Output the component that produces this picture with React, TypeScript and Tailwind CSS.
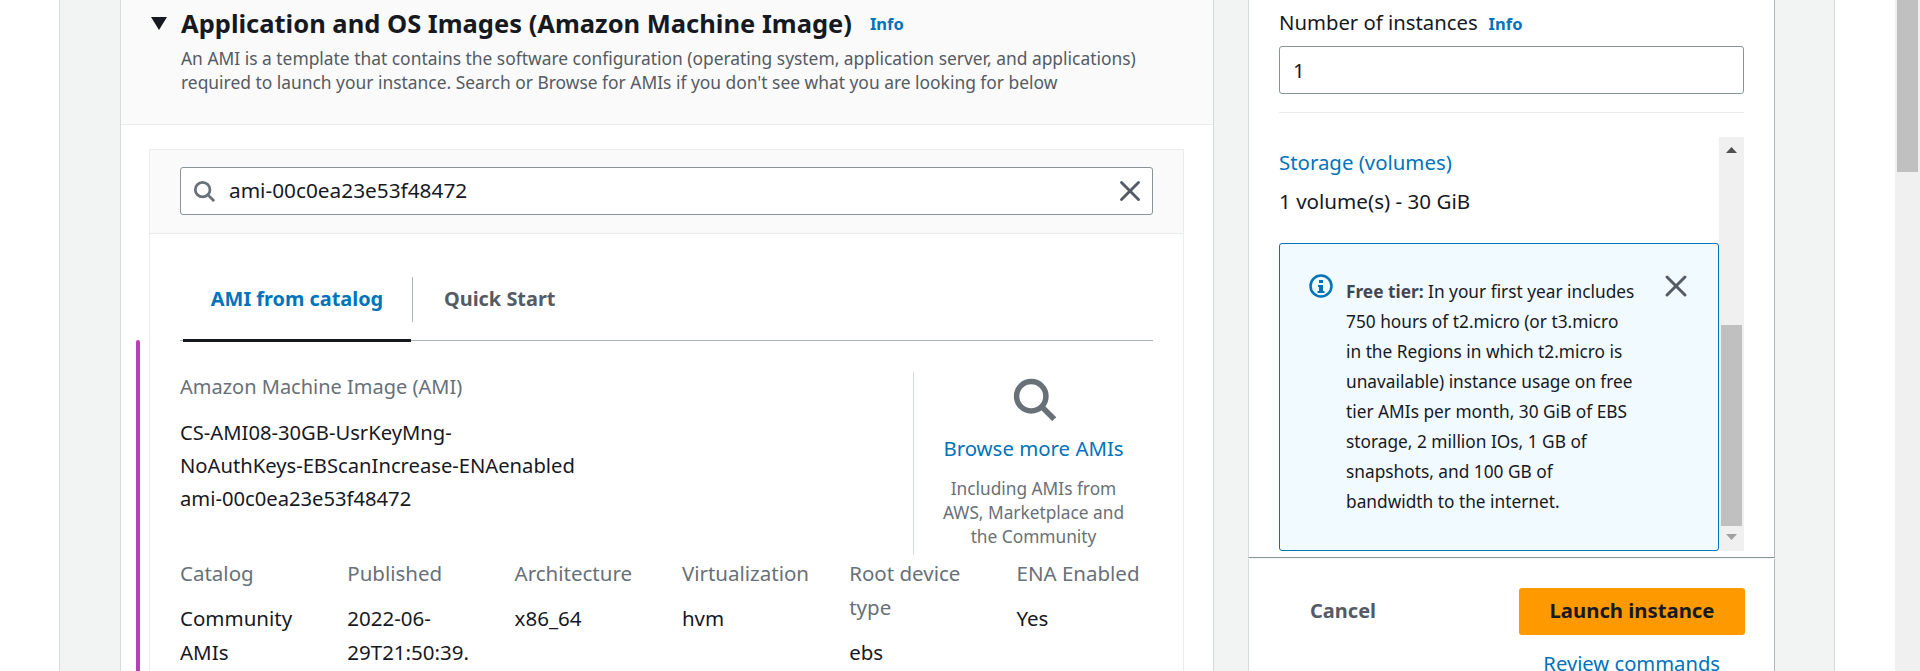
import { X } from "lucide-react";

const columns = [
  { label: "Catalog", value: ["Community", "AMIs"] },
  { label: "Published", value: ["2022-06-", "29T21:50:39."] },
  { label: "Architecture", value: ["x86_64"] },
  { label: "Virtualization", value: ["hvm"] },
  { label: "Root device type", value: ["ebs"] },
  { label: "ENA Enabled", value: ["Yes"] },
];

function SearchIcon({ className }: { className: string }) {
  return (
    <svg className={className} viewBox="0 0 24 24" fill="none" stroke="currentColor" strokeWidth="3">
      <circle cx="10.5" cy="10.5" r="8" />
      <path d="M16.5 16.5L23 23" />
    </svg>
  );
}

function InfoLink() {
  return <span className="text-[16.5px] font-bold text-[#0073bb]">Info</span>;
}

function AmiPanel() {
  return (
    <section className="relative w-[1094px] shrink-0 border-x border-[#d5dbdb] bg-white">
      {/* purple marker drawn over the screenshot */}
      <div className="absolute left-[15px] top-[340px] h-[400px] w-[4px] rounded-t-[2px] bg-[#bb3fbb]" />

      {/* header */}
      <div className="h-[125px] border-b border-[#eaeded] bg-[#fafafa] pl-[30px] pt-[7px]">
        <div className="flex items-center">
          <svg className="h-[13px] w-[16px]" viewBox="0 0 16 13">
            <path d="M0 0h16L8 13z" fill="#16191f" />
          </svg>
          <h2 className="ml-[14px] whitespace-nowrap text-[25.5px] leading-[32px] font-bold text-[#16191f]">
            Application and OS Images (Amazon Machine Image)
          </h2>
          <span className="ml-[18px] mt-[2px]">
            <InfoLink />
          </span>
        </div>
        <p className="ml-[30px] mt-[7px] whitespace-nowrap text-[17.4px] leading-[24px] text-[#545b64]">
          An AMI is a template that contains the software configuration (operating system, application server, and
          applications)
          <br />
          required to launch your instance. Search or Browse for AMIs if you don't see what you are looking for below
        </p>
      </div>

      {/* card */}
      <div className="ml-[28px] mr-[29px] mt-[24px] border border-b-0 border-[#eaeded] h-[600px]">
        <div className="h-[84px] border-b border-[#eaeded] bg-[#fafafa] px-[30px] pt-[17px]">
          <div className="flex h-[48px] items-center rounded-[3px] border border-[#879596] bg-white pl-[12px] pr-[5px]">
            <SearchIcon className="h-[22px] w-[22px] text-[#687078]" />
            <span className="ml-[14px] flex-1 text-[20.8px] text-[#16191f]">ami-00c0ea23e53f48472</span>
            <X className="h-[34px] w-[34px] text-[#545b64]" strokeWidth={2} />
          </div>
        </div>

        <div className="px-[30px] pt-[43px]">
          <div className="flex h-[64px] items-start border-b border-[#aab7b8]">
            <div className="relative z-10 ml-[3px] flex h-[65px] w-[228px] justify-center border-b-[3px] border-[#16191f]">
              <span className="flex h-[43px] items-center text-[19.9px] font-bold text-[#0073bb]">AMI from catalog</span>
            </div>
            <div className="ml-[1px] h-[45px] w-px bg-[#aab7b8]" />
            <span className="ml-[31px] flex h-[43px] items-center text-[19.9px] font-bold text-[#545b64]">Quick Start</span>
          </div>

          <div className="mt-[31px] flex h-[183px]">
            <div className="flex-1 pt-[3px]">
              <div className="text-[20px] leading-[24px] text-[#687078]">Amazon Machine Image (AMI)</div>
              <div className="mt-[17px] text-[20.2px] leading-[33px] text-[#16191f]">
                CS-AMI08-30GB-UsrKeyMng-
                <br />
                NoAuthKeys-EBScanIncrease-ENAenabled
                <br />
                ami-00c0ea23e53f48472
              </div>
            </div>
            <div className="flex w-[240px] flex-col items-center border-l border-[#d5dbdb] pt-[5px]">
              <SearchIcon className="h-[44px] w-[44px] text-[#687078]" />
              <div className="mt-[15px] text-[20.4px] leading-[24px] text-[#0073bb]">Browse more AMIs</div>
              <div className="mt-[17px] text-center text-[17.3px] leading-[24px] text-[#687078]">
                Including AMIs from
                <br />
                AWS, Marketplace and
                <br />
                the Community
              </div>
            </div>
          </div>

          <div className="mt-px grid grid-cols-[repeat(6,167.3px)] text-[20.5px] leading-[34px]">
            {columns.map((col) => (
              <div key={col.label}>
                <div className="w-[130px] text-[#687078]">{col.label}</div>
                <div className="mt-[11px] text-[#16191f]">
                  {col.value.map((line) => (
                    <div key={line}>{line}</div>
                  ))}
                </div>
              </div>
            ))}
          </div>
        </div>
      </div>
    </section>
  );
}

function SummaryPanel() {
  return (
    <section className="flex w-[527px] shrink-0 flex-col">
      <div className="h-[558px] shrink-0 border-x border-b border-l-[#d5dbdb] border-r-[#aab7b8] border-b-[#879596] bg-white px-[30px] pt-[10px]">
        <div className="flex h-[24px] items-center text-[20.3px] text-[#16191f]">
          Number of instances
          <span className="ml-[11px]">
            <InfoLink />
          </span>
        </div>
        <div className="mt-[12px] flex h-[48px] items-center rounded-[3px] border border-[#879596] px-[13px] text-[20.5px] text-[#16191f]">
          1
        </div>
        <div className="mt-[18px] h-px bg-[#eaeded]" />

        <div className="mt-[24px] flex h-[414px]">
          <div className="w-[440px] pt-[13px]">
            <div className="text-[20.4px] leading-[24px] text-[#0073bb]">Storage (volumes)</div>
            <div className="mt-[15px] text-[20.6px] leading-[24px] text-[#16191f]">1 volume(s) - 30 GiB</div>
            <div className="mt-[30px] flex h-[308px] rounded-[3px] border border-[#0073bb] bg-[#f1faff] pl-[29px] pt-[30px]">
              <svg className="h-[24px] w-[24px] shrink-0" viewBox="0 0 24 24" fill="none">
                <circle cx="12" cy="12" r="10.5" stroke="#0073bb" strokeWidth="2.5" />
                <rect x="10" y="6" width="4" height="3" fill="#0073bb" />
                <path d="M9 11h5v6h1.5v2h-7v-2H10v-4H9z" fill="#0073bb" />
              </svg>
              <p className="ml-[13px] mt-[3px] w-[294px] shrink-0 whitespace-nowrap text-[17.3px] leading-[30px] text-[#16191f]">
                <b className="text-[#414750]">Free tier:</b> In your first year includes
                <br />
                750 hours of t2.micro (or t3.micro
                <br />
                in the Regions in which t2.micro is
                <br />
                unavailable) instance usage on free
                <br />
                tier AMIs per month, 30 GiB of EBS
                <br />
                storage, 2 million IOs, 1 GB of
                <br />
                snapshots, and 100 GB of
                <br />
                bandwidth to the internet.
              </p>
              <X className="ml-[18px] mt-[-6px] h-[36px] w-[36px] shrink-0 text-[#545b64]" strokeWidth={2} />
            </div>
          </div>

          {/* inner scrollbar */}
          <div className="flex w-[25px] flex-col items-center bg-[#f0f0f0]">
            <svg className="mt-[10px] h-[6px] w-[11px]" viewBox="0 0 11 6">
              <path d="M5.5 0L11 6H0z" fill="#505050" />
            </svg>
            <div className="mt-[172px] h-[201px] w-[21px] bg-[#c0c0c0]" />
            <svg className="mt-[8px] h-[6px] w-[11px]" viewBox="0 0 11 6">
              <path d="M0 0h11L5.5 6z" fill="#a0a0a0" />
            </svg>
          </div>
        </div>
      </div>

      <div className="mt-px flex-1 border-x border-l-[#d5dbdb] border-r-[#aab7b8] bg-white pl-[61px] pt-[29px]">
        <div className="flex items-start">
          <span className="flex h-[45px] w-[209px] items-center text-[20px] font-bold text-[#545b64]">Cancel</span>
          <div className="flex h-[47px] w-[226px] items-center justify-center rounded-[3px] bg-[#ff9900] pb-[2px] text-[20.3px] font-bold text-[#16191f]">
            Launch instance
          </div>
        </div>
        <div className="mt-[16px] pr-[54px] text-right text-[20.2px] leading-[24px] text-[#0073bb]">Review commands</div>
      </div>
    </section>
  );
}

export default function App() {
  return (
    <div className="flex h-[671px] w-[1920px] overflow-hidden bg-white font-['Noto_Sans',sans-serif]">
      <div className="w-[60px] shrink-0 border-r border-[#d5dbdb]" />
      <div className="flex flex-1 gap-[34px] bg-[#f2f3f3] pl-[60px]">
        <AmiPanel />
        <SummaryPanel />
      </div>
      <div className="w-[61px] shrink-0 border-l border-[#d5dbdb]" />
      {/* page scrollbar */}
      <div className="w-[25px] shrink-0 bg-[#f0f0f0] px-[2px]">
        <div className="h-[172px] bg-[#c0c0c0]" />
      </div>
    </div>
  );
}
